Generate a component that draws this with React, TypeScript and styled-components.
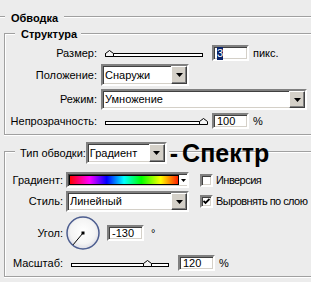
import React from "react";
import styled, { createGlobalStyle, css } from "styled-components";

const ETCH = "#a0a0a0";

const GlobalStyle = createGlobalStyle`
  html, body { margin: 0; padding: 0; overflow: hidden; background: #ececec; }
  body {
    font-family: "Liberation Sans", Arial, sans-serif;
    font-size: 11px;
    line-height: 13px;
    color: #000;
  }
  * { box-sizing: border-box; }
`;

const lineBg = (top: number) =>
  `linear-gradient(to bottom, transparent ${top}px, ${ETCH} ${top}px, ${ETCH} ${top + 1}px, #fff ${top + 1}px, #fff ${top + 2}px, transparent ${top + 2}px)`;

const sunken = css`
  border: 2px solid;
  border-color: #808080 #fff #fff #808080;
  box-shadow: inset 1px 1px 0 #404040, inset -1px -1px 0 #d4d0c8;
  background: #fff;
`;

const Page = styled.div`
  width: 311px;
  height: 282px;
  padding-top: 12px;
  display: flex;
  flex-direction: column;
`;

const SectionHead = styled.div`
  display: flex;
  height: 13px;
`;

const Rule = styled.div<{ $top: number; $w?: number; $ml?: number }>`
  flex: ${(p) => (p.$w ? `0 0 ${p.$w}px` : "1 1 auto")};
  margin-left: ${(p) => p.$ml ?? 0}px;
  align-self: stretch;
  background: ${(p) => lineBg(p.$top)};
  display: flex;
  white-space: nowrap;
`;

const SectionTitle = styled.div`
  font-weight: bold;
  margin: 0 6px;
  white-space: nowrap;
`;

const Group = styled.div<{ $mt: number }>`
  margin: ${(p) => p.$mt}px 0 0 4px;
  display: flex;
  flex-direction: column;
`;

const GroupHead = styled.div<{ $h: number }>`
  display: flex;
  align-items: center;
  height: ${(p) => p.$h}px;
`;

const Corner = styled.div<{ $h: number }>`
  align-self: flex-end;
  flex: 0 0 11px;
  height: ${(p) => p.$h}px;
  border-top: 1px solid ${ETCH};
  border-left: 1px solid ${ETCH};
  box-shadow: inset 1px 1px 0 #fff;
`;

const GroupTitle = styled.div`
  font-weight: bold;
  margin: 0 4px 0 6px;
  white-space: nowrap;
`;

const HeadLabel = styled.div`
  flex: 0 0 69px;
  padding-left: 5px;
  white-space: nowrap;
`;

const Annotation = styled.div`
  margin-left: 1px;
  font-family: "Liberation Sans", Arial, sans-serif;
  font-weight: bold;
  font-size: 25px;
  line-height: 22px;
  word-spacing: -3px;
`;

const GroupBody = styled.div<{ $pt: number; $pb: number }>`
  border-left: 1px solid ${ETCH};
  border-bottom: 1px solid ${ETCH};
  box-shadow: inset 1px 0 0 #fff, 0 1px 0 #fff;
  padding: ${(p) => p.$pt}px 0 ${(p) => p.$pb}px 0;
  display: flex;
  flex-direction: column;
  gap: 3px;
`;

const Row = styled.div<{ $h: number; $mt?: number; $mb?: number }>`
  display: flex;
  align-items: center;
  height: ${(p) => p.$h}px;
  margin: ${(p) => p.$mt ?? 0}px 0 ${(p) => p.$mb ?? 0}px;
  white-space: nowrap;
`;

const Label = styled.div<{ $w: number; $mr: number }>`
  flex: 0 0 ${(p) => p.$w}px;
  margin-right: ${(p) => p.$mr}px;
  text-align: right;
`;

const Field = styled.div<{ $w: number; $h: number }>`
  ${sunken};
  flex: none;
  width: ${(p) => p.$w}px;
  height: ${(p) => p.$h}px;
  padding: 0 3px;
  display: flex;
  align-items: center;
`;

const Selected = styled.span`
  background: #0a246a;
  color: #fff;
`;

const Unit = styled.span`
  margin-left: 4px;
`;

const SelectBox = styled.div<{ $w: number; $h: number; $mr?: number }>`
  ${sunken};
  flex: none;
  width: ${(p) => p.$w}px;
  height: ${(p) => p.$h}px;
  margin-right: ${(p) => p.$mr ?? 0}px;
  display: flex;
  align-items: stretch;
  padding-left: 2px;
`;

const SelectText = styled.div`
  flex: 1;
  display: flex;
  align-items: center;
  overflow: hidden;
`;

const DropButton = styled.div`
  flex: 0 0 16px;
  background: #d4d0c8;
  border: 1px solid;
  border-color: #fff #404040 #404040 #fff;
  box-shadow: inset -1px -1px 0 #808080;
  display: flex;
  align-items: center;
  justify-content: center;
`;

const SliderWrap = styled.div<{ $inset: number; $track: number }>`
  position: relative;
  flex: none;
  width: ${(p) => p.$inset + p.$track + 4}px;
  height: 16px;
  margin-right: 5px;
`;

const Track = styled.div<{ $inset: number; $track: number }>`
  margin: 8px 0 0 ${(p) => p.$inset}px;
  width: ${(p) => p.$track}px;
  height: 4px;
  border: 1px solid #000;
  background: #fff;
`;

const ThumbSvg = styled.svg`
  position: absolute;
  top: 5px;
  display: block;
`;

const Swatch = styled.div<{ $w: number }>`
  ${sunken};
  flex: none;
  width: ${(p) => p.$w}px;
  height: 16px;
  margin-right: 11px;
  padding: 1px 0 1px 1px;
  display: flex;
`;

const GradientBar = styled.div`
  flex: 1;
  border: 1px solid #000;
  background: linear-gradient(
    to right,
    #ff0000 0%,
    #ff00ff 18%,
    #0000ff 34%,
    #00ffff 50%,
    #00ff00 66%,
    #ffff00 84%,
    #ff2000 100%
  );
`;

const SmallArrowArea = styled.div`
  flex: 0 0 8px;
  display: flex;
  align-items: center;
  justify-content: center;
  background: #fff;
`;

const CheckItem = styled.div`
  display: flex;
  align-items: center;
`;

const CheckBox = styled.div`
  ${sunken};
  flex: none;
  width: 13px;
  height: 13px;
  margin-right: 3px;
  display: flex;
  align-items: center;
  justify-content: center;
`;

const CheckText = styled.span`
  letter-spacing: -0.55px;
`;

const DialSvg = styled.svg`
  flex: none;
  display: block;
  margin-right: 7px;
`;

const DegUnit = styled.span`
  margin-left: 7px;
`;

const Arrow = ({ w = 7, h = 4 }: { w?: number; h?: number }) => (
  <svg width={w} height={h} viewBox={`0 0 ${w} ${h}`} style={{ display: "block" }}>
    <polygon points={`0,0 ${w},0 ${w / 2},${h}`} fill="#000" />
  </svg>
);

const Select = ({ w, h, mr, text }: { w: number; h: number; mr?: number; text: string }) => (
  <SelectBox $w={w} $h={h} $mr={mr}>
    <SelectText>{text}</SelectText>
    <DropButton>
      <Arrow />
    </DropButton>
  </SelectBox>
);

const Slider = ({ inset, track, value }: { inset: number; track: number; value: number }) => (
  <SliderWrap $inset={inset} $track={track}>
    <Track $inset={inset} $track={track} />
    <ThumbSvg
      width={9}
      height={7}
      viewBox="0 0 9 7"
      style={{ left: inset + Math.round(value * (track - 4)) }}
    >
      <polygon points="0.5,6.5 0.5,3.5 4.5,0.5 8.5,3.5 8.5,6.5" fill="#f4f4f4" stroke="#000" strokeWidth={1} />
    </ThumbSvg>
  </SliderWrap>
);

const Check = ({ checked, label }: { checked?: boolean; label: string }) => (
  <CheckItem>
    <CheckBox>
      {checked && (
        <svg width={7} height={7} viewBox="0 0 7 7" style={{ display: "block" }}>
          <polyline points="0.5,3 2.5,5 6.5,1" fill="none" stroke="#000" strokeWidth={1.8} />
        </svg>
      )}
    </CheckBox>
    <CheckText>{label}</CheckText>
  </CheckItem>
);

const Dial = () => {
  const c = 17;
  const r = 15.5;
  const a = (130 * Math.PI) / 180;
  const ex = c + Math.cos(a) * r;
  const ey = c + Math.sin(a) * r;
  return (
    <DialSvg width={34} height={34} viewBox="0 0 34 34">
      <defs>
        <radialGradient id="dialFill" cx="50%" cy="45%" r="55%">
          <stop offset="0%" stopColor="#ffffff" />
          <stop offset="70%" stopColor="#f4f4f4" />
          <stop offset="100%" stopColor="#dcdce4" />
        </radialGradient>
      </defs>
      <circle cx={c} cy={c} r={16} fill="url(#dialFill)" stroke="#4c5d8f" strokeWidth={1.5} />
      <line x1={c} y1={c} x2={ex} y2={ey} stroke="#000" strokeWidth={1} />
      <rect x={c - 1.5} y={c - 1.5} width={3} height={3} fill="#000" />
    </DialSvg>
  );
};

export default function App() {
  return (
    <>
      <GlobalStyle />
      <Page>
        <SectionHead>
          <Rule $top={4} $w={5} />
          <SectionTitle>Обводка</SectionTitle>
          <Rule $top={4} />
        </SectionHead>

        <Group $mt={3}>
          <GroupHead $h={13}>
            <Corner $h={8} />
            <GroupTitle>Структура</GroupTitle>
            <Rule $top={5} />
          </GroupHead>
          <GroupBody $pt={4} $pb={5}>
            <Row $h={16}>
              <Label $w={92} $mr={4}>Размер:</Label>
              <Slider inset={4} track={98} value={0} />
              <Field $w={37} $h={16}>
                <Selected>3</Selected>
              </Field>
              <Unit>пикс.</Unit>
            </Row>
            <Row $h={22}>
              <Label $w={92} $mr={4}>Положение:</Label>
              <Select w={88} h={22} text="Снаружи" />
            </Row>
            <Row $h={21}>
              <Label $w={92} $mr={4}>Режим:</Label>
              <Select w={206} h={21} text="Умножение" />
            </Row>
            <Row $h={16}>
              <Label $w={92} $mr={4}>Непрозрачность:</Label>
              <Slider inset={4} track={98} value={1} />
              <Field $w={37} $h={16}>100</Field>
              <Unit>%</Unit>
            </Row>
          </GroupBody>
        </Group>

        <Group $mt={7}>
          <GroupHead $h={22}>
            <Corner $h={13} />
            <HeadLabel>Тип обводки:</HeadLabel>
            <Select w={81} h={22} text="Градиент" />
            <Rule $top={9} $ml={2}>
              <Annotation>- Спектр</Annotation>
            </Rule>
          </GroupHead>
          <GroupBody $pt={8} $pb={5}>
            <Row $h={16}>
              <Label $w={58} $mr={3}>Градиент:</Label>
              <Swatch $w={123}>
                <GradientBar />
                <SmallArrowArea>
                  <Arrow w={5} h={3} />
                </SmallArrowArea>
              </Swatch>
              <Check label="Инверсия" />
            </Row>
            <Row $h={21}>
              <Label $w={58} $mr={3}>Стиль:</Label>
              <Select w={123} h={21} mr={11} text="Линейный" />
              <Check checked label="Выровнять по слою" />
            </Row>
            <Row $h={34} $mt={1} $mb={2}>
              <Label $w={58} $mr={3}>Угол:</Label>
              <Dial />
              <Field $w={37} $h={16}>-130</Field>
              <DegUnit>°</DegUnit>
            </Row>
            <Row $h={16}>
              <Label $w={58} $mr={3}>Масштаб:</Label>
              <Slider inset={5} track={98} value={0.77} />
              <Field $w={37} $h={16}>120</Field>
              <Unit>%</Unit>
            </Row>
          </GroupBody>
        </Group>
      </Page>
    </>
  );
}
